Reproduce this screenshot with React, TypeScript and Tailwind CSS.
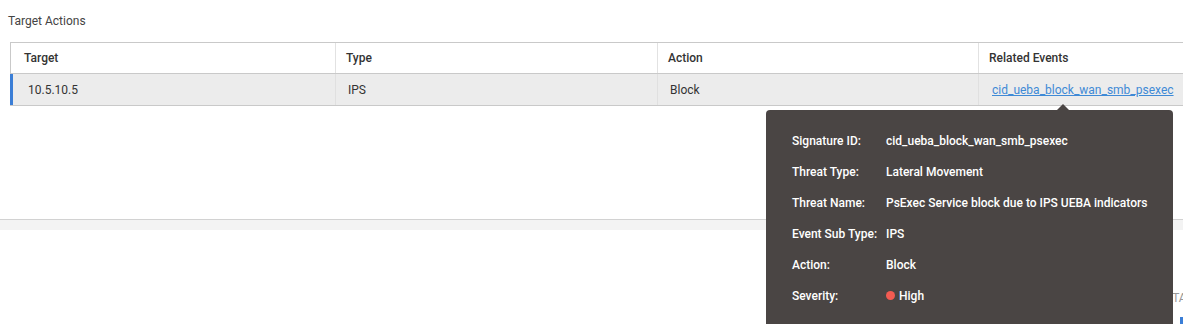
import React from "react";

export default function App() {
  const font = { fontFamily: "Roboto, 'Liberation Sans', sans-serif" };
  return (
    <div className="relative w-[1183px] h-[324px] overflow-hidden bg-white text-[#333]" style={font}>
      <div className="pl-[8px] pt-[13px] text-[12px] leading-[16px] text-[#444]">Target Actions</div>
      <div className="ml-[10px] mt-[13px] w-[1200px] border border-[#c9c9c9] border-r-0">
        <div className="flex h-[31px] items-center bg-white text-[12px] font-medium text-[#333] border-b border-[#c9c9c9]">
          <div className="w-[325px] h-full flex items-center pl-[13px] border-r border-[#e2e2e2]">Target</div>
          <div className="w-[322px] h-full flex items-center pl-[10px] border-r border-[#e2e2e2]">Type</div>
          <div className="w-[321px] h-full flex items-center pl-[10px] border-r border-[#e2e2e2]">Action</div>
          <div className="flex-1 h-full flex items-center pl-[10px]">Related Events</div>
        </div>
        <div className="flex h-[31px] items-center bg-[#ececec] text-[12px] text-[#333] border-l-[3px] border-[#3b7ed6] -ml-px">
          <div className="w-[323px] h-full flex items-center pl-[15px] border-r border-[#e0e0e0]">10.5.10.5</div>
          <div className="w-[322px] h-full flex items-center pl-[12px] border-r border-[#e0e0e0]">IPS</div>
          <div className="w-[321px] h-full flex items-center pl-[12px] border-r border-[#e0e0e0]">Block</div>
          <div className="flex-1 h-full flex items-center pl-[13px]">
            <span className="text-[#3f8ad6] underline">cid_ueba_block_wan_smb_psexec</span>
          </div>
        </div>
      </div>
      <div className="mt-[113px] border-t border-[#d2d2d2] h-[11px] bg-[#f3f3f3]"></div>
      <div className="absolute left-[1165px] top-[289px] text-[12px] text-[#999]">STATUS</div>
      <div className="absolute left-[1180px] top-[317px] w-[4px] h-[8px] bg-[#3b7ed6]"></div>

      <div className="absolute left-[766px] top-[110px] w-[407px] h-[240px] rounded-[4px] bg-[#4a4544] pt-[15px] pl-[26px] text-[12px] font-medium text-white">
        <div className="absolute -top-[6px] left-[291px] w-0 h-0 border-l-[6px] border-r-[6px] border-b-[6px] border-l-transparent border-r-transparent border-b-[#4a4544]"></div>
        {[
          ["Signature ID:", "cid_ueba_block_wan_smb_psexec"],
          ["Threat Type:", "Lateral Movement"],
          ["Threat Name:", "PsExec Service block due to IPS UEBA indicators"],
          ["Event Sub Type:", "IPS"],
          ["Action:", "Block"],
          ["Severity:", "High"],
        ].map(([k, v]) => (
          <div key={k} className="flex h-[31px] items-center">
            <div className="w-[94px]">{k}</div>
            <div className="flex items-center">
              {k === "Severity:" && <span className="inline-block w-[9px] h-[9px] rounded-full bg-[#f25b52] mr-[4px]"></span>}
              {v}
            </div>
          </div>
        ))}
      </div>
    </div>
  );
}
